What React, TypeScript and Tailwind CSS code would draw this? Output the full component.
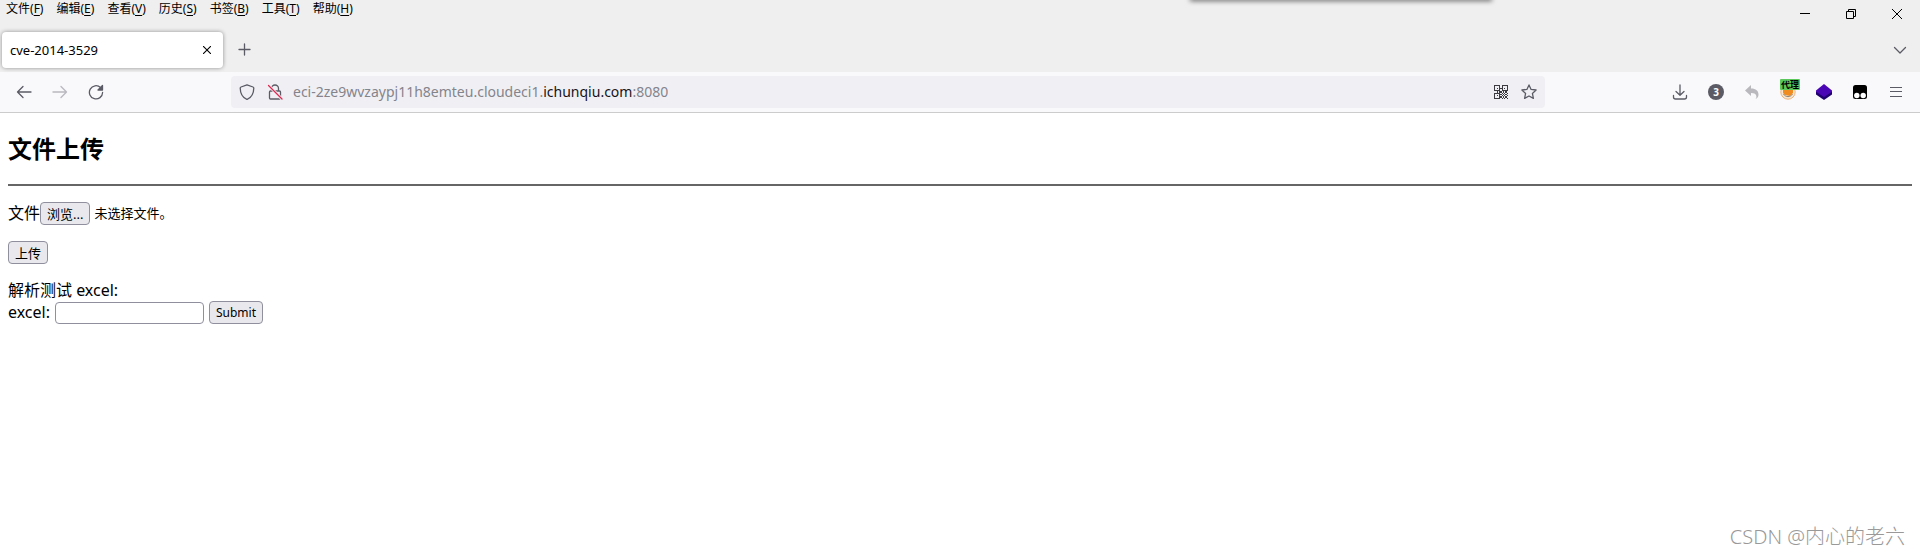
import { useRef, useState } from "react";
import type { ReactNode } from "react";

const MENUS = [
  { label: "文件", accel: "F" },
  { label: "编辑", accel: "E" },
  { label: "查看", accel: "V" },
  { label: "历史", accel: "S" },
  { label: "书签", accel: "B" },
  { label: "工具", accel: "T" },
  { label: "帮助", accel: "H" },
];

const QR_ROWS = [
  "11111011111",
  "10001010001",
  "10101110101",
  "10001010001",
  "11111011111",
  "00101101010",
  "11111010101",
  "10001101010",
  "10101010101",
  "10001101010",
  "11111010101",
];

function Icon({ children, className = "" }: { children: ReactNode; className?: string }) {
  return (
    <svg
      viewBox="0 0 16 16"
      className={`size-4 ${className}`}
      fill="none"
      stroke="currentColor"
      strokeWidth="1.3"
      strokeLinecap="round"
      strokeLinejoin="round"
      aria-hidden="true"
    >
      {children}
    </svg>
  );
}

function ToolButton({ label, children, className = "" }: { label: string; children: ReactNode; className?: string }) {
  return (
    <button
      type="button"
      aria-label={label}
      className={`flex h-8 w-9 items-center justify-center text-[#5b5b66] ${className}`}
    >
      {children}
    </button>
  );
}

function TitleBar() {
  return (
    <div className="flex h-7 items-start justify-between">
      <nav className="flex gap-[13px] pl-[6px] text-xs leading-[18px]">
        {MENUS.map((m) => (
          <button key={m.accel} type="button" className="whitespace-nowrap">
            {m.label}(<span className="underline underline-offset-2">{m.accel}</span>)
          </button>
        ))}
      </nav>
      <div className="flex text-black">
        <button type="button" aria-label="最小化" className="flex h-7 w-[46px] items-center justify-center">
          <svg viewBox="0 0 10 10" className="size-[10px]" stroke="currentColor" fill="none" aria-hidden="true">
            <path d="M0 4.5h10" />
          </svg>
        </button>
        <button type="button" aria-label="还原" className="flex h-7 w-[46px] items-center justify-center">
          <svg viewBox="0 0 10 10" className="size-[10px]" stroke="currentColor" fill="none" aria-hidden="true">
            <path d="M.5 2.5h7v7h-7zM2.5 2.5v-2h7v7h-2" />
          </svg>
        </button>
        <button type="button" aria-label="关闭" className="flex h-7 w-[46px] items-center justify-center">
          <svg viewBox="0 0 10 10" className="size-[10px]" stroke="currentColor" fill="none" aria-hidden="true">
            <path d="M0 0l10 10M10 0L0 10" />
          </svg>
        </button>
      </div>
    </div>
  );
}

function TabStrip() {
  return (
    <div className="flex h-11 items-center pr-1 pl-[2px]">
      <div className="flex h-9 w-[221px] items-center justify-between rounded bg-white pr-2 pl-2 shadow-[0_0_4px_rgba(0,0,0,0.4)]">
        <span className="text-[13px] leading-5">cve-2014-3529</span>
        <button type="button" aria-label="关闭标签页" className="flex size-4 items-center justify-center">
          <svg viewBox="0 0 8 8" className="size-2" stroke="currentColor" fill="none" strokeWidth="1.1" aria-hidden="true">
            <path d="M0 0l8 8M8 0L0 8" />
          </svg>
        </button>
      </div>
      <ToolButton label="新建标签页" className="ml-1">
        <Icon>
          <path d="M7.5 2v11M2 7.5h11" />
        </Icon>
      </ToolButton>
      <ToolButton label="列出所有标签页" className="-mr-[2px] ml-auto">
        <Icon>
          <path d="M2.5 5.5L8 11l5.500-5.500" />
        </Icon>
      </ToolButton>
    </div>
  );
}

function AddressBar() {
  return (
    <div className="ml-[117px] flex h-8 min-w-0 flex-1 items-center rounded bg-[#f0f0f4] pr-[2px] pl-2 text-[#5b5b66]">
      <Icon>
        <path d="M8 .8l6 2.200c.5.200.8.500.8 1-.1 5.500-2.300 9.300-6.300 11.200a1 1 0 0 1-1 0C3.500 13.300 1.300 9.500 1.200 4c0-.5.300-.8.800-1z" />
      </Icon>
      <Icon className="ml-3">
        <path d="M4.500 7V4.500a3.500 3.500 0 0 1 7 0V7M3.500 7h9a1 1 0 0 1 1 1v6a1 1 0 0 1-1 1h-9a1 1 0 0 1-1-1V8a1 1 0 0 1 1-1z" />
        <path d="M1.500 1.500l13.500 13.500" stroke="#f0f0f4" strokeWidth="3" />
        <path d="M1.500 1.500l13.500 13.500" stroke="#e22850" />
      </Icon>
      <a href="#" className="ml-[10px] truncate text-sm text-[#84848c]">
        eci-2ze9wvzaypj11h8emteu.cloudeci1.<span className="text-[#15141a]">ichunqiu.com</span>:8080
      </a>
      <button type="button" aria-label="二维码" className="ml-auto flex size-7 items-center justify-center">
        <svg
          viewBox="0 0 11 11"
          className="size-[14px]"
          fill="#3b3b40"
          shapeRendering="crispEdges"
          aria-hidden="true"
        >
          {QR_ROWS.map((row, y) =>
            row.split("").map((c, x) => c === "1" && <rect key={`${x}-${y}`} x={x} y={y} width="1" height="1" />),
          )}
        </svg>
      </button>
      <button type="button" aria-label="将此页加入书签" className="flex w-7 items-center justify-center">
        <Icon>
          <path d="M8 .9l2.100 4.500 5 .6-3.700 3.400 1 5L8 12l-4.400 2.400 1-5L.9 6l5-.6z" />
        </Icon>
      </button>
    </div>
  );
}

function NavBar() {
  return (
    <div className="flex h-10 items-center bg-[#f9f9fb] pr-[6px] pl-[6px]">
      <ToolButton label="后退">
        <Icon>
          <path d="M15 8H1.500M7 2.500L1.500 8 7 13.500" />
        </Icon>
      </ToolButton>
      <ToolButton label="前进" className="opacity-40">
        <Icon>
          <path d="M1 8h13.500M9 2.500L14.500 8 9 13.500" />
        </Icon>
      </ToolButton>
      <ToolButton label="刷新">
        <Icon>
          <path d="M12.500 3.500A6.600 6.600 0 1 0 14.600 8.500" />
          <path d="M14.500 1.500v4.500H10z" fill="currentColor" />
        </Icon>
      </ToolButton>
      <AddressBar />
      <div className="ml-[117px] flex">
        <ToolButton label="下载">
          <Icon>
            <path d="M8 1v10M4 7.500L8 11.200l4-3.700M1.500 11.500V13a2 2 0 0 0 2 2h9a2 2 0 0 0 2-2v-1.500" />
          </Icon>
        </ToolButton>
        <ToolButton label="扩展">
          <span className="flex size-4 items-center justify-center rounded-full bg-[#5b5b66] text-[10px] font-bold text-white">
            3
          </span>
        </ToolButton>
        <ToolButton label="撤销">
          <svg viewBox="0 0 16 16" className="size-4" fill="#b9b9bd" aria-hidden="true">
            <path d="M7 1v3.500c5 0 7.500 2.500 7.500 6 0 2-1 3.700-3 4.500.8-1 .9-1.700.9-2.500 0-2.500-2-3.500-5.400-3.500V12L1 6.500z" />
          </svg>
        </ToolButton>
        <ToolButton label="代理" className="relative">
          <svg viewBox="0 0 16 16" className="size-4" aria-hidden="true">
            <circle cx="8" cy="8" r="7.200" fill="#f8e6d0" stroke="#edb27a" />
            <path d="M3 5l3-1 7 2v3l-3 3-5-1-2-2z" fill="#ef8b1f" />
            <path d="M3.500 10c2 3.500 7 3.500 9 0" stroke="#8d8072" fill="none" />
          </svg>
          <span className="absolute top-[3px] left-[10px] flex h-[11px] w-5 items-center justify-center rounded-[1px] bg-[#5bc85b] text-[9px] leading-[11px] font-bold whitespace-nowrap text-black">
            代理
          </span>
        </ToolButton>
        <ToolButton label="图层">
          <svg viewBox="0 0 16 16" className="size-4" aria-hidden="true">
            <path d="M0 7.500v3L8 16l8-5.500v-3z" fill="#20006e" />
            <path d="M8 0l8 6.500v1.200L8 13 0 7.700V6.500z" fill="#4a06b5" />
          </svg>
        </ToolButton>
        <ToolButton label="篡改猴">
          <svg viewBox="0 0 16 16" className="size-4" aria-hidden="true">
            <rect x="1" y="1" width="14" height="14" rx="2.500" fill="#000" />
            <circle cx="4.800" cy="11.500" r="2.700" fill="#fff" />
            <circle cx="11.200" cy="11.500" r="2.700" fill="#fff" />
          </svg>
        </ToolButton>
        <ToolButton label="打开应用程序菜单">
          <svg viewBox="0 0 12 10" className="h-[10px] w-3" stroke="currentColor" aria-hidden="true">
            <path d="M0 .5h12M0 4.500h12M0 9.500h12" />
          </svg>
        </ToolButton>
      </div>
    </div>
  );
}

const formButton =
  "h-[23px] rounded border border-[#8f8f9d] bg-[#e9e9ed] px-[6px] leading-5 whitespace-nowrap text-black";

function UploadPage() {
  const fileRef = useRef<HTMLInputElement>(null);
  const [fileName, setFileName] = useState("");

  return (
    <main className="px-2 pt-5 text-base leading-[21px]">
      <h2 className="text-2xl leading-8 font-bold">文件上传</h2>
      <hr className="mt-[19px] border-t-2 border-[#666]" />
      <form onSubmit={(e) => e.preventDefault()}>
        <div className="mt-4 flex h-[23px] items-center">
          <label htmlFor="file">文件</label>
          <input
            id="file"
            ref={fileRef}
            type="file"
            className="hidden"
            onChange={(e) => setFileName(e.target.files?.[0]?.name ?? "")}
          />
          <button type="button" className={`text-[13px] ${formButton}`} onClick={() => fileRef.current?.click()}>
            浏览...
          </button>
          <span className="ml-1 text-[13px]">{fileName || "未选择文件。"}</span>
        </div>
        <button type="submit" className={`mt-4 block text-[13px] ${formButton}`}>
          上传
        </button>
      </form>
      <form className="mt-4" onSubmit={(e) => e.preventDefault()}>
        <p>解析测试 excel:</p>
        <div className="flex h-[23px] items-center">
          <label htmlFor="excel">excel:</label>
          <input
            id="excel"
            type="text"
            className="ml-[5px] h-[22px] w-[149px] rounded-sm border border-[#8f8f9d] bg-white px-1 text-[13px]"
          />
          <button type="submit" className={`ml-[5px] text-xs ${formButton}`}>
            Submit
          </button>
        </div>
      </form>
    </main>
  );
}

export default function App() {
  return (
    <div className="relative min-h-screen overflow-hidden bg-white font-['Noto_Sans','Noto_Sans_CJK_SC',sans-serif] text-black">
      <header className="border-b border-[#ccc] bg-[#efefef]">
        <TitleBar />
        <TabStrip />
        <NavBar />
      </header>
      <UploadPage />
      <div className="absolute -top-1 left-[62%] h-1 w-[302px] shadow-[0_1px_5px_rgba(0,0,0,0.6)]" />
      <div className="absolute right-[15px] bottom-1 text-xl font-light text-[#999]">CSDN @内心的老六</div>
    </div>
  );
}
